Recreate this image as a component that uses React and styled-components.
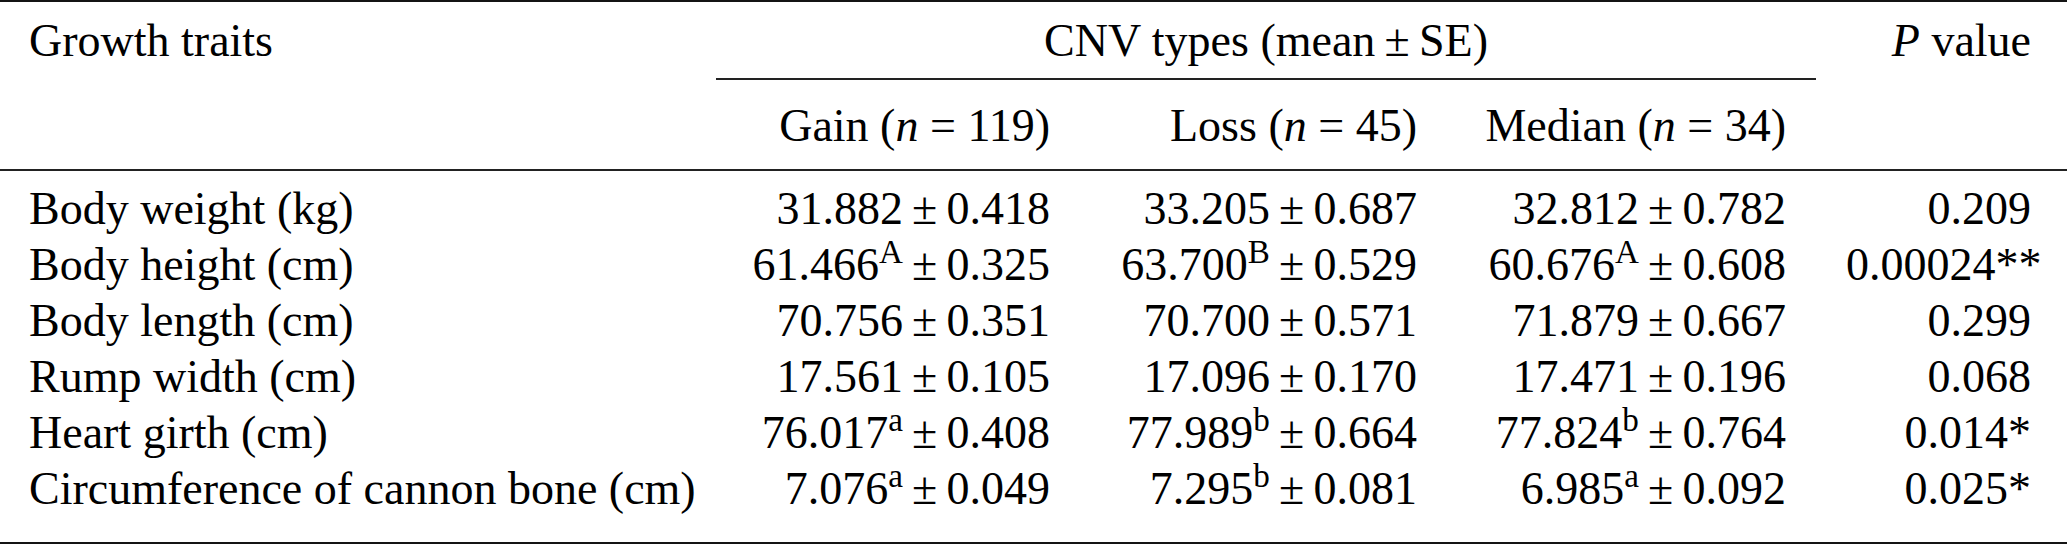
import styled, { createGlobalStyle } from "styled-components"

const GlobalStyle = createGlobalStyle`
  html, body {
    margin: 0;
    padding: 0;
    background: #ffffff;
  }
  body {
    font-family: "Liberation Serif", "Times New Roman", serif;
    color: #000000;
  }
`

const COLUMNS = "716px 364px 367px 369px 1fr"

const Table = styled.div`
  width: 2067px;
  border-top: 2.5px solid #141414;
  border-bottom: 2.5px solid #141414;
  font-size: 46px;
`

const Row = styled.div`
  display: grid;
  grid-template-columns: ${COLUMNS};
  align-items: start;
  padding-top: ${(p) => p.$top || 0}px;
  padding-bottom: ${(p) => p.$bottom || 0}px;
`

const Cell = styled.div`
  line-height: 56px;
  height: 56px;
  white-space: nowrap;
  padding: 0 30px;
  text-align: ${(p) => p.$align || "right"};

  &:first-child {
    padding-left: 29px;
  }
  &:last-child {
    padding-right: 36px;
  }
`

const SpanCell = styled.div`
  grid-column: 2 / 5;
  display: flex;
  flex-direction: column;
`

const SpanLabel = styled.div`
  line-height: 56px;
  text-align: center;
  white-space: nowrap;
`

const SpanRule = styled.div`
  margin-top: 9px;
  height: 1.5px;
  background: #222222;
`

const HeadRule = styled.div`
  height: 1.5px;
  background: #222222;
`

const Body = styled.div`
  padding-top: 10px;
  padding-bottom: 25px;
`

const Ital = styled.i`
  font-style: italic;
`

const Op = styled.span`
  margin: 0 0.2em;
`

const Sup = styled.sup`
  font-size: 0.72em;
  line-height: 0;
  vertical-align: 0.52em;
`

const Value = ({ mean, mark, se }) => (
  <>
    {mean}
    {mark && <Sup>{mark}</Sup>}
    <Op>±</Op>
    {se}
  </>
)

const rows = [
  {
    trait: "Body weight (kg)",
    gain: ["31.882", "", "0.418"],
    loss: ["33.205", "", "0.687"],
    median: ["32.812", "", "0.782"],
    p: "0.209",
  },
  {
    trait: "Body height (cm)",
    gain: ["61.466", "A", "0.325"],
    loss: ["63.700", "B", "0.529"],
    median: ["60.676", "A", "0.608"],
    p: "0.00024**",
  },
  {
    trait: "Body length (cm)",
    gain: ["70.756", "", "0.351"],
    loss: ["70.700", "", "0.571"],
    median: ["71.879", "", "0.667"],
    p: "0.299",
  },
  {
    trait: "Rump width (cm)",
    gain: ["17.561", "", "0.105"],
    loss: ["17.096", "", "0.170"],
    median: ["17.471", "", "0.196"],
    p: "0.068",
  },
  {
    trait: "Heart girth (cm)",
    gain: ["76.017", "a", "0.408"],
    loss: ["77.989", "b", "0.664"],
    median: ["77.824", "b", "0.764"],
    p: "0.014*",
  },
  {
    trait: "Circumference of cannon bone (cm)",
    gain: ["7.076", "a", "0.049"],
    loss: ["7.295", "b", "0.081"],
    median: ["6.985", "a", "0.092"],
    p: "0.025*",
  },
]

const groups = [
  { name: "Gain", n: 119 },
  { name: "Loss", n: 45 },
  { name: "Median", n: 34 },
]

const App = () => {
  return (
    <>
      <GlobalStyle />
      <Table>
        <Row $top={11}>
          <Cell $align="left">Growth traits</Cell>
          <SpanCell>
            <SpanLabel>
              CNV types (mean<Op>±</Op>SE)
            </SpanLabel>
            <SpanRule />
          </SpanCell>
          <Cell>
            <Ital>P</Ital> value
          </Cell>
        </Row>
        <Row $top={18.5} $bottom={15}>
          <Cell />
          {groups.map((g) => (
            <Cell key={g.name}>
              {g.name} (<Ital>n</Ital> = {g.n})
            </Cell>
          ))}
          <Cell />
        </Row>
        <HeadRule />
        <Body>
          {rows.map((r) => (
            <Row key={r.trait}>
              <Cell $align="left">{r.trait}</Cell>
              <Cell>
                <Value mean={r.gain[0]} mark={r.gain[1]} se={r.gain[2]} />
              </Cell>
              <Cell>
                <Value mean={r.loss[0]} mark={r.loss[1]} se={r.loss[2]} />
              </Cell>
              <Cell>
                <Value mean={r.median[0]} mark={r.median[1]} se={r.median[2]} />
              </Cell>
              <Cell>{r.p}</Cell>
            </Row>
          ))}
        </Body>
      </Table>
    </>
  )
}

export default App
